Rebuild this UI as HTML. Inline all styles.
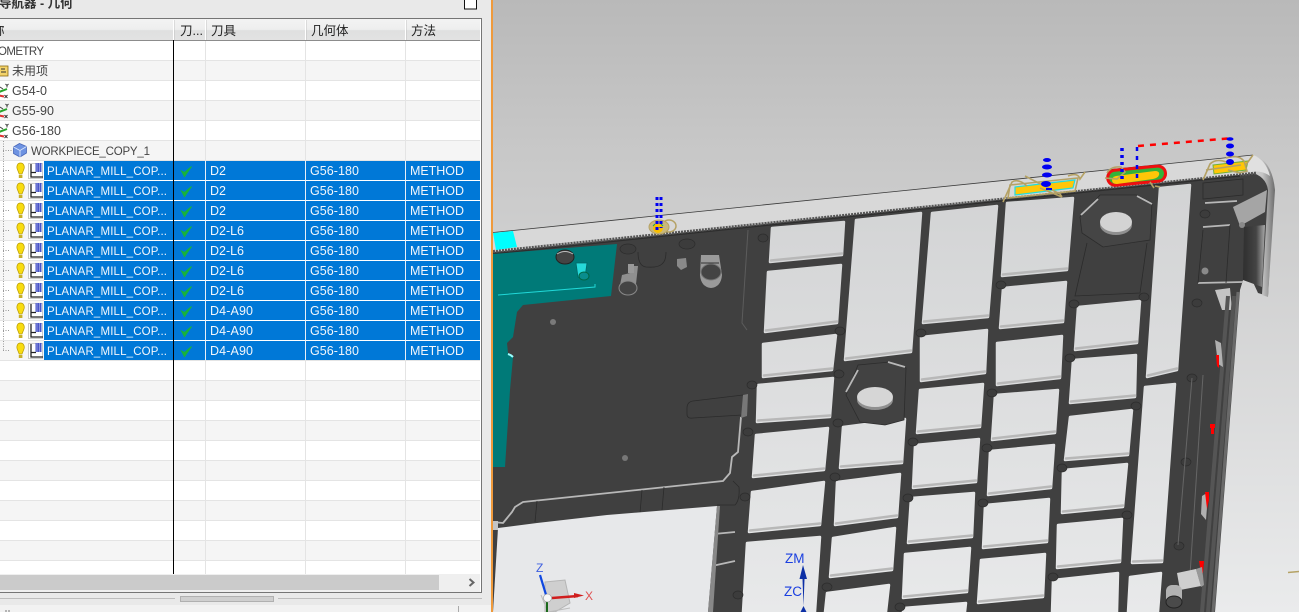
<!DOCTYPE html>
<html><head><meta charset="utf-8"><title>导航器 - 几何</title>
<style>
html,body{margin:0;padding:0;background:#e9e9e9;width:1299px;height:612px;overflow:hidden}
svg{display:block}
text{font-family:"Liberation Sans","Noto Sans CJK SC",sans-serif;font-size:12.5px;fill:#444}
.w text{fill:#f2f6fb}
.u{font-size:11.5px}
.w .u{font-size:11.5px}
.h{fill:#222;font-size:12.5px}
.b{stroke:#b8b8b8;stroke-width:2.500;stroke-linecap:round;fill:none}
.c{fill:url(#c);stroke:url(#c);stroke-width:2.500;stroke-linejoin:round}
.s{fill:#3c3c3c;stroke:#2c2c2c;stroke-width:.7}
.o{fill:none;stroke:#2b2b2b;stroke-width:.8}
.l{fill:none;stroke:#b8b8b8;stroke-width:1.800;stroke-linejoin:round}
.p{fill:none;stroke:#0000f0;stroke-width:3;stroke-dasharray:3 3}
.t{fill:none;stroke:#b5a265;stroke-width:1.600}
</style></head><body>
<svg width="1299" height="612" viewBox="0 0 1299 612" xmlns="http://www.w3.org/2000/svg">
<defs>
<linearGradient id="bg" gradientUnits="userSpaceOnUse" x1="0" y1="0" x2="0" y2="612"><stop offset="0" stop-color="#b9b9b9"/><stop offset=".25" stop-color="#c8c8c8"/><stop offset="1" stop-color="#eaebec"/></linearGradient>
<linearGradient id="c" gradientUnits="userSpaceOnUse" x1="0" y1="180" x2="0" y2="612"><stop offset="0" stop-color="#d2d3d4"/><stop offset="1" stop-color="#e8e9ea"/></linearGradient>
<linearGradient id="hd" x1="0" y1="0" x2="0" y2="1"><stop offset="0" stop-color="#f3f3f3"/><stop offset=".5" stop-color="#eeeeee"/><stop offset=".55" stop-color="#dfe0e0"/><stop offset="1" stop-color="#e2e2e2"/></linearGradient>
<linearGradient id="cyl" x1="0" y1="0" x2="1" y2="0"><stop offset="0" stop-color="#2f2f2f"/><stop offset=".6" stop-color="#444"/><stop offset="1" stop-color="#aaa"/></linearGradient>
<linearGradient id="cap" x1="0" y1="0" x2="1" y2="0"><stop offset="0" stop-color="#dcdcdc"/><stop offset=".5" stop-color="#c4c4c4"/><stop offset="1" stop-color="#6c6c6c"/></linearGradient>
<g id="op">
<path d="M3,170.500h7" stroke="#999" stroke-dasharray="1 1.500" fill="none"/>
<path d="M20.500,163c-3,0-4.200,3-3.300,6l2,5h2.800l2-5c.9-3-.5-6-3.500-6z" fill="#f8dc10" stroke="#b89a00" stroke-width=".7"/>
<rect x="18.800" y="175" width="3.600" height="3" fill="#c7b02a"/>
<path d="M28.500,163.500h14v15h-14z" fill="#fff" stroke="#bdbdbd" stroke-width=".8"/>
<path d="M31,164v13h12M31,172.500h5" stroke="#222" stroke-width="1.300" fill="none"/>
<rect x="35.500" y="163" width="6" height="9" fill="#4a55c8"/>
<path d="M37,163v9M39.500,163v9" stroke="#a9b0ea" stroke-width=".7"/>
<path d="M181.500,171l3,5.500l7-10l-7,6z" fill="#19b23a" stroke="#19b23a" stroke-width="1"/>
</g>
<g id="cs">
<path d="M0,3l3,2" stroke="#444" fill="none"/>
<path d="M-1,8l8-3" stroke="#2aa52a" stroke-width="2" fill="none"/>
<path d="M-1,11.500l5,1" stroke="#d33" stroke-width="2" fill="none"/>
<path d="M5.500,0l1.500,1.500l1.500-1.500M7,1.500v2M4.500,11l3,3M7.500,11l-3,3" stroke="#333" stroke-width=".9" fill="none"/>
</g>
</defs>

<!-- panel -->
<rect width="1299" height="612" fill="#e9e9e9"/>
<text x="-1" y="7.500" style="font-size:12.500px;font-weight:bold;fill:#333">导航器 - 几何</text>
<rect x="464.500" y="-2" width="12" height="11" fill="#fff" stroke="#111"/>

<rect x="0" y="18" width="482" height="575" fill="#fff"/>
<rect x="0" y="19" width="480" height="21" fill="url(#hd)"/>
<path d="M0,40.500H480" stroke="#8c8c8c"/>
<path d="M173.500,20v20M205.500,20v20M305.500,20v20M405.500,20v20" stroke="#fff" stroke-width="1"/>
<path d="M174.500,20v20M206.500,20v20M306.500,20v20M406.500,20v20" stroke="#b4b4b4" stroke-width=".6" opacity=".6"/>
<text class="h" x="-8" y="35">称</text>
<text class="h" x="180" y="35">刀...</text>
<text class="h" x="211" y="35">刀具</text>
<text class="h" x="311" y="35">几何体</text>
<text class="h" x="411" y="35">方法</text>

<!-- stripes -->
<g fill="#f5f5f5">
<rect y="61" width="480" height="19"/><rect y="101" width="480" height="19"/><rect y="141" width="480" height="19"/>
<rect y="381" width="480" height="19"/><rect y="421" width="480" height="19"/><rect y="461" width="480" height="19"/><rect y="501" width="480" height="19"/><rect y="541" width="480" height="19"/>
</g>
<path d="M0,60.500H480M0,80.500H480M0,100.500H480M0,120.500H480M0,140.500H480M0,160.500H480M0,360.500H480M0,380.500H480M0,400.500H480M0,420.500H480M0,440.500H480M0,460.500H480M0,480.500H480M0,500.500H480M0,520.500H480M0,540.500H480M0,560.500H480" stroke="#e4e4e4"/>
<path d="M205.500,41V574M305.500,41V574M405.500,41V574" stroke="#e4e4e4"/>

<!-- selected -->
<g fill="#0078d7">
<rect x="44" y="161" width="436" height="19"/><rect x="44" y="181" width="436" height="19"/><rect x="44" y="201" width="436" height="19"/><rect x="44" y="221" width="436" height="19"/><rect x="44" y="241" width="436" height="19"/><rect x="44" y="261" width="436" height="19"/><rect x="44" y="281" width="436" height="19"/><rect x="44" y="301" width="436" height="19"/><rect x="44" y="321" width="436" height="19"/><rect x="44" y="341" width="436" height="19"/>
</g>
<g fill="#f6f6f6">
<rect x="0" y="181" width="44" height="19"/><rect x="0" y="221" width="44" height="19"/><rect x="0" y="261" width="44" height="19"/><rect x="0" y="301" width="44" height="19"/><rect x="0" y="341" width="44" height="19"/>
</g>
<path d="M0,180.500H44M0,200.500H44M0,220.500H44M0,240.500H44M0,260.500H44M0,280.500H44M0,300.500H44M0,320.500H44M0,340.500H44" stroke="#e6e6e6"/>
<path d="M205.500,161V360M305.500,161V360M405.500,161V360" stroke="#e8f0f8" stroke-width="1"/>
<path d="M3.500,141V350" stroke="#999" stroke-dasharray="1 1.500"/>
<path d="M3,150.500h10" stroke="#999" stroke-dasharray="1 1.500"/>

<!-- icons -->
<rect x="-1" y="66" width="9" height="10" fill="#f3d36a" stroke="#8a6a10" stroke-width=".8"/>
<path d="M1,69h4M1,72h5" stroke="#333" stroke-width="1"/>
<use href="#cs" x="0" y="84"/><use href="#cs" x="0" y="104"/><use href="#cs" x="0" y="124"/>
<path d="M13.500,147l6-3.500l7,3v6.500l-6.500,4l-6.500-3.500z" fill="#6e93e2" stroke="#4a68b8" stroke-width=".8"/>
<path d="M13.500,147l6.500,3.500l6.500-4M20,150.500v7" stroke="#dbe6fa" stroke-width=".9" fill="none"/>
<use href="#op"/><use href="#op" y="20"/><use href="#op" y="40"/><use href="#op" y="60"/><use href="#op" y="80"/><use href="#op" y="100"/><use href="#op" y="120"/><use href="#op" y="140"/><use href="#op" y="160"/><use href="#op" y="180"/>

<!-- text -->
<text class="u" x="-2" y="55" textLength="46">OMETRY</text>
<text x="12" y="75" style="font-size:12px">未用项</text>
<text x="12" y="95" textLength="35">G54-0</text>
<text x="12" y="115" textLength="42">G55-90</text>
<text x="12" y="135" textLength="49">G56-180</text>
<text class="u" x="31" y="155" textLength="119">WORKPIECE_COPY_1</text>
<g class="w">
<text class="u" x="47" y="175" textLength="120">PLANAR_MILL_COP...</text><text x="210" y="175" textLength="16">D2</text><text x="310" y="175" textLength="49">G56-180</text><text x="410" y="175" textLength="54">METHOD</text>
<text class="u" x="47" y="195" textLength="120">PLANAR_MILL_COP...</text><text x="210" y="195" textLength="16">D2</text><text x="310" y="195" textLength="49">G56-180</text><text x="410" y="195" textLength="54">METHOD</text>
<text class="u" x="47" y="215" textLength="120">PLANAR_MILL_COP...</text><text x="210" y="215" textLength="16">D2</text><text x="310" y="215" textLength="49">G56-180</text><text x="410" y="215" textLength="54">METHOD</text>
<text class="u" x="47" y="235" textLength="120">PLANAR_MILL_COP...</text><text x="210" y="235" textLength="34">D2-L6</text><text x="310" y="235" textLength="49">G56-180</text><text x="410" y="235" textLength="54">METHOD</text>
<text class="u" x="47" y="255" textLength="120">PLANAR_MILL_COP...</text><text x="210" y="255" textLength="34">D2-L6</text><text x="310" y="255" textLength="49">G56-180</text><text x="410" y="255" textLength="54">METHOD</text>
<text class="u" x="47" y="275" textLength="120">PLANAR_MILL_COP...</text><text x="210" y="275" textLength="34">D2-L6</text><text x="310" y="275" textLength="49">G56-180</text><text x="410" y="275" textLength="54">METHOD</text>
<text class="u" x="47" y="295" textLength="120">PLANAR_MILL_COP...</text><text x="210" y="295" textLength="34">D2-L6</text><text x="310" y="295" textLength="49">G56-180</text><text x="410" y="295" textLength="54">METHOD</text>
<text class="u" x="47" y="315" textLength="120">PLANAR_MILL_COP...</text><text x="210" y="315" textLength="43">D4-A90</text><text x="310" y="315" textLength="49">G56-180</text><text x="410" y="315" textLength="54">METHOD</text>
<text class="u" x="47" y="335" textLength="120">PLANAR_MILL_COP...</text><text x="210" y="335" textLength="43">D4-A90</text><text x="310" y="335" textLength="49">G56-180</text><text x="410" y="335" textLength="54">METHOD</text>
<text class="u" x="47" y="355" textLength="120">PLANAR_MILL_COP...</text><text x="210" y="355" textLength="43">D4-A90</text><text x="310" y="355" textLength="49">G56-180</text><text x="410" y="355" textLength="54">METHOD</text>
</g>
<path d="M173.500,40V574" stroke="#000" stroke-width="1"/>

<!-- scrollbar + frame -->
<rect x="0" y="574" width="480" height="18" fill="#efefef"/>
<rect x="0" y="575" width="439" height="15" fill="#cbcbcb"/>
<path d="M469.500,579l4,3.500l-4,3.500" fill="none" stroke="#666" stroke-width="2"/>
<path d="M0,18.500H481.500V592.500H0" fill="none" stroke="#757575"/>
<path d="M0,598.500H175M278,598.500H482" stroke="#bdbdbd"/>
<rect x="180.500" y="596.500" width="93" height="5" fill="#cfcfcf" stroke="#b0b0b0"/>
<rect x="0" y="605" width="491" height="7" fill="#f2f2f2"/>
<path d="M458.500,606V612" stroke="#aaa"/>
<path d="M5,611h2M8,611h2" stroke="#777"/>

<!-- viewport -->
<rect x="493" y="0" width="806" height="612" fill="url(#bg)"/>

<!-- wall band -->
<path d="M493,233L1253,155Q1270,160 1273,187L1257,175L493,252Z" fill="#d8d8d8"/>
<path d="M493,232.500L1253,155" stroke="#3a3a3a" stroke-width=".8" fill="none"/>

<!-- body -->
<path d="M493,252L1257,173Q1272,172 1274,190L1268,296L1258,293L1252,280L1243,280L1240,290L1215,612H493Z" fill="#404040"/>
<path d="M1253,155Q1272,160 1275,190L1268,297L1262,295L1268,190Q1266,176 1250,172Z" fill="url(#cap)"/>
<path d="M1240,166L1253,155Q1266,160 1270,176Q1262,170 1250,172Z" fill="#e0e0e0"/>
<path d="M493,251.500L1257,173" stroke="#555" stroke-width="3" stroke-dasharray="2 1"/>
<path d="M493,254L1240,176" stroke="#2d2d2d" stroke-width="1.200"/>

<!-- teal -->
<path d="M493,254L617,244L611,296L523,305L517,312L513,337L507,343L508,353L513,357L510,390L505,467L493,467Z" fill="#007a78"/>
<path d="M498,295L595,287L595,284" stroke="#20d8d8" stroke-width="1" fill="none"/>
<path d="M493,233L513,231L517,247L496,250Z" fill="#00ffff"/>
<ellipse cx="565" cy="257" rx="9" ry="7" fill="#444" stroke="#222"/><path d="M557,254q8-5 16,0" stroke="#bbb" fill="none"/>
<path d="M576,263h11l-2,14a5,4 0 0 1-7,0z" fill="#26d9d9" stroke="#066" stroke-width=".8"/><ellipse cx="584" cy="276" rx="5" ry="4" fill="#0a8d8d" stroke="#064"/>
<path d="M508,354q3,1 5,3" stroke="#9ff" stroke-width="2" fill="none"/>

<!-- dark details -->
<path class="o" d="M638,252q0,14 8,15q12,1 16-3q4-3 4-12"/>
<ellipse cx="628" cy="249" rx="8" ry="5" class="s"/><ellipse cx="687" cy="244" rx="8" ry="5" class="s"/>
<path d="M620,285l2-10l8-2l3-7h5l-2,18q-1,5-8,5q-8,0-8-4z" fill="#8f8f8f"/><ellipse cx="628" cy="288" rx="9" ry="7" fill="#444" stroke="#888"/>
<rect x="628" y="264" width="6" height="9" fill="#999"/>
<path d="M677,259l9-1l1,9l-6,3l-4-4z" fill="#8a8a8a"/>
<path d="M701,255h18l3,20q-1,12-11,13q-10-1-11-13z" fill="#9a9a9a"/><path d="M701,263h18M701,271h20" stroke="#333" stroke-width="1"/><ellipse cx="711" cy="272" rx="10" ry="8" fill="#444" stroke="#777"/>
<path d="M748,230L742,323L747,330" stroke="#5c5c5c" fill="none"/>
<circle cx="553" cy="322" r="3" fill="#7a7a7a"/><circle cx="625" cy="458" r="3" fill="#777"/>
<path class="l" d="M493,522L503,523L512,512L515,507L523,502L723,481L730,473L732,457L738,452L741,417"/>
<path class="o" d="M743,395L693,401Q687,402 687,408V414Q687,419 693,418L742,415"/>
<path d="M743,395l5-1l-1,22l-6,2z" fill="#777"/>
<path class="o" d="M537,501L535,522M642,490L640,513M664,487L662,510"/>
<path class="o" d="M717,505L735,505Q740,500 739,487L733,481"/>
<path class="l" d="M714,534L735,532M712,566L735,561"/>

<!-- white plate -->
<path d="M498,528L537,523L607,515L717,506L708,612H493Z" fill="#e7e8ea"/>
<path d="M717,506L708,612L713,612L720,506Z" fill="#888"/>

<!-- cells -->
<g id="cells">
<polygon class="c" points="772,228 844,222 842,255 770,262"/><path class="b" d="M771,260.500L842,253.500"/>
<polygon class="c" points="768,272 841,265 837,323 765,332"/><path class="b" d="M766,330.500L837,321.500"/>
<polygon class="c" points="763,344 836,335 832,370 763,377"/><path class="b" d="M764,375.500L832,368.500"/>
<polygon class="c" points="758,385 833,378 830,417 757,422"/><path class="b" d="M758,420.500L830,415.500"/>
<polygon class="c" points="756,435 828,428 824,470 753,477"/><path class="b" d="M754,475.500L824,468.500"/>
<polygon class="c" points="752,492 824,482 820,525 749,532"/><path class="b" d="M750,530.500L820,523.500"/>
<polygon class="c" points="747,543 820,537 815,612 743,612"/>
<polygon class="c" points="856,220 921,213 911,352 845,360"/><path class="b" d="M846,358.500L911,350.500"/>
<polygon class="c" points="843,427 905,419 902,463 840,468"/><path class="b" d="M841,466.500L902,461.500"/>
<polygon class="c" points="837,482 900,474 897,517 835,525"/><path class="b" d="M836,523.500L897,515.500"/>
<polygon class="c" points="833,538 895,528 892,570 830,577"/><path class="b" d="M831,575.500L892,568.500"/>
<polygon class="c" points="827,593 889,585 886,612 825,612"/>
<polygon class="c" points="932,213 997,206 988,317 923,323"/><path class="b" d="M924,321.500L988,315.500"/>
<polygon class="c" points="921,337 987,330 985,373 921,381"/><path class="b" d="M922,379.500L985,371.500"/>
<polygon class="c" points="920,390 983,384 980,427 917,433"/><path class="b" d="M918,431.500L980,425.500"/>
<polygon class="c" points="915,445 979,439 976,482 913,488"/><path class="b" d="M914,486.500L976,480.500"/>
<polygon class="c" points="911,498 974,493 972,537 908,543"/><path class="b" d="M909,541.500L972,535.500"/>
<polygon class="c" points="905,554 970,548 967,592 903,598"/><path class="b" d="M904,596.500L967,590.500"/>
<polygon class="c" points="903,608 966,603 965,612 903,612"/>
<polygon class="c" points="1007,203 1073,198 1067,270 1002,276"/><path class="b" d="M1003,274.500L1067,268.500"/>
<polygon class="c" points="1003,288 1066,282 1063,322 1000,328"/><path class="b" d="M1001,326.500L1063,320.500"/>
<polygon class="c" points="997,343 1062,336 1060,378 997,385"/><path class="b" d="M998,383.500L1060,376.500"/>
<polygon class="c" points="995,395 1058,390 1055,433 992,440"/><path class="b" d="M993,438.500L1055,431.500"/>
<polygon class="c" points="990,451 1054,445 1051,488 988,495"/><path class="b" d="M989,493.500L1051,486.500"/>
<polygon class="c" points="985,505 1049,499 1047,542 983,548"/><path class="b" d="M984,546.500L1047,540.500"/>
<polygon class="c" points="981,560 1045,554 1043,597 978,603"/><path class="b" d="M979,601.500L1043,595.500"/>
<polygon class="c" points="1078,307 1140,301 1137,343 1075,350"/><path class="b" d="M1076,348.500L1137,341.500"/>
<polygon class="c" points="1073,360 1136,355 1135,397 1070,403"/><path class="b" d="M1071,401.500L1135,395.500"/>
<polygon class="c" points="1070,417 1132,410 1128,455 1065,460"/><path class="b" d="M1066,458.500L1128,453.500"/>
<polygon class="c" points="1063,470 1127,464 1123,507 1062,513"/><path class="b" d="M1063,511.500L1123,505.500"/>
<polygon class="c" points="1058,525 1122,519 1120,562 1057,568"/><path class="b" d="M1058,566.500L1120,560.500"/>
<polygon class="c" points="1053,580 1118,573 1117,612 1052,612"/>
<polygon class="c" points="1160,188 1190,185 1177,370 1147,377"/><path class="b" d="M1148,375.500L1177,368.500"/>
<polygon class="c" points="1145,387 1175,384 1162,562 1132,563"/><path class="b" d="M1133,561.500L1162,560.500"/>
<polygon class="c" points="1130,577 1161,573 1158,612 1128,612"/>
</g>

<!-- screw bosses -->
<g class="s">
<ellipse cx="1001" cy="285" rx="5" ry="4"/><ellipse cx="921" cy="333" rx="5" ry="4"/><ellipse cx="1074" cy="304" rx="5" ry="4"/><ellipse cx="1144" cy="297" rx="5" ry="4"/><ellipse cx="1070" cy="358" rx="5" ry="4"/><ellipse cx="1205" cy="214" rx="5" ry="4"/><ellipse cx="1197" cy="303" rx="5" ry="4"/>
<ellipse cx="992" cy="393" rx="5" ry="4"/><ellipse cx="913" cy="442" rx="5" ry="4"/><ellipse cx="987" cy="448" rx="5" ry="4"/><ellipse cx="1062" cy="468" rx="5" ry="4"/><ellipse cx="1136" cy="406" rx="5" ry="4"/><ellipse cx="1127" cy="515" rx="5" ry="4"/><ellipse cx="983" cy="503" rx="5" ry="4"/><ellipse cx="908" cy="498" rx="5" ry="4"/><ellipse cx="1053" cy="577" rx="5" ry="4"/><ellipse cx="1192" cy="378" rx="5" ry="4"/><ellipse cx="1186" cy="462" rx="5" ry="4"/><ellipse cx="1179" cy="546" rx="5" ry="4"/><ellipse cx="900" cy="607" rx="5" ry="4"/>
<ellipse cx="752" cy="385" rx="5" ry="4"/><ellipse cx="748" cy="432" rx="5" ry="4"/><ellipse cx="745" cy="497" rx="5" ry="4"/><ellipse cx="839" cy="374" rx="5" ry="4"/><ellipse cx="838" cy="423" rx="5" ry="4"/><ellipse cx="835" cy="477" rx="5" ry="4"/><ellipse cx="827" cy="587" rx="5" ry="4"/><ellipse cx="738" cy="595" rx="5" ry="4"/><ellipse cx="763" cy="238" rx="5" ry="4"/><ellipse cx="840" cy="331" rx="5" ry="4"/>
</g>

<!-- pocket with hole (upper) -->
<path d="M1080,217L1100,195L1137,195L1152,203L1150,240L1103,247L1082,233Z" fill="#454545" stroke="#2c2c2c" stroke-width=".8"/>
<path class="l" d="M1081,215L1098,199M1137,196L1152,204"/>
<path class="o" d="M1087,243L1075,296L1140,293L1147,243"/>
<ellipse cx="1116" cy="225" rx="16" ry="10" fill="#8f8f8f"/><ellipse cx="1116" cy="222" rx="16" ry="10" fill="#d3d3d3"/>
<!-- hole lower -->
<path d="M846,395L858,365L890,362L906,368L904,420L885,425L860,422Z" fill="#424242" stroke="#2c2c2c" stroke-width=".8"/>
<path class="l" d="M846,392L858,370M888,362L905,367"/>
<ellipse cx="875" cy="400" rx="18" ry="10" fill="#8f8f8f"/><ellipse cx="875" cy="397" rx="18" ry="10" fill="#d6d6d6"/>

<!-- right end detail -->
<path class="o" d="M1203,183L1243,179L1243,195L1203,199Z"/>
<path class="l" d="M1205,203L1237,201M1203,227L1230,225M1198,283L1243,282"/>
<path d="M1233,207L1267,190L1265,212L1240,226Z" fill="#a5a5a5"/>
<path d="M1244,227L1265,225L1262,287L1243,280Z" fill="url(#cyl)"/>
<path d="M1215,290L1230,288L1232,310L1222,310Z" fill="#c4c4c4"/>
<circle cx="1205" cy="271" r="3.500" fill="#8a8a8a"/><circle cx="1242" cy="225" r="3" fill="#8a8a8a"/>
<path class="o" d="M1203,230L1198,283M1230,225L1226,283"/>
<path d="M1234,296L1208,612M1228,296L1202,612" stroke="#555" stroke-width="4" fill="none"/>
<path d="M1238,292L1213,612" stroke="#6a6a6a" stroke-width="3" fill="none"/>
<path d="M1192,378L1178,545M1203,375L1190,575" stroke="#666" fill="none"/>
<path d="M1215,340l3,24l5,3l-2-24z" fill="#b0b0b0"/>
<path d="M1216,355l3,0l0,13l-2-2z" fill="#f00"/>
<path d="M1210,424h5v4h-1v6h-3v-6h-1z" fill="#f00"/>
<path d="M1202,496l5-3l1,2l-2,25l-5-6z" fill="#b0b0b0"/><path d="M1205,492h4v8l-2,9z" fill="#f00"/>
<path d="M1199,561h5l-1,12l-2,0z" fill="#f00"/>
<path d="M1177,573L1196,569L1201,586L1180,590Z" fill="#cfcfcf"/><path d="M1196,569l6-2l2,18l-3,2z" fill="#999"/>
<rect x="1166" y="585" width="16" height="20" rx="6" fill="#b2b2b2"/><ellipse cx="1174" cy="602" rx="8" ry="6" fill="#4a4a4a" stroke="#222"/>
<path d="M1288,572.500L1299,571.500" stroke="#b5a265" stroke-width="1.500"/>

<!-- toolpath 1 -->
<ellipse cx="669" cy="226" rx="7" ry="6" fill="none" stroke="#b5a265" stroke-width="1.500"/>
<ellipse cx="659" cy="227" rx="10" ry="7" fill="#c9b87c" stroke="#b5a265"/>
<circle cx="658" cy="228" r="5" fill="#f9bf00"/>
<path d="M653,226l2-2M663,226l-2-2" stroke="#1fa84f" fill="none"/>
<path class="p" d="M657,197V230M661,197V228"/>
<!-- toolpath 2 -->
<path d="M1015,187L1075,180L1073,188L1015,195Z" fill="#ffc608" stroke="#22dcdc" stroke-width="1.200"/>
<path d="M1010,185L1078,178L1075,191L1008,198Z" class="t" stroke-width="2"/>
<path class="t" d="M1003,202L1012,182q6-4 15,4M1025,176L1060,194L1062,197M1068,176q10-4 12,3l5-7M1040,188L1062,197"/>
<g fill="#0000f0"><ellipse cx="1047" cy="160" rx="4" ry="2"/><ellipse cx="1047" cy="167" rx="5" ry="2.500"/><ellipse cx="1047" cy="175" rx="5" ry="2.500"/><ellipse cx="1046" cy="184" rx="5" ry="3"/><rect x="1046" y="188" width="6" height="2"/></g>
<!-- toolpath 3 -->
<rect x="0" y="0" width="58" height="15" rx="7.500" transform="translate(1107,171) rotate(-5.500)" fill="#34b23a" stroke="#ee1010" stroke-width="3"/>
<path d="M1116,176L1155,171Q1160,171 1159,175Q1158,178 1153,179L1117,184Q1112,184 1112,180Q1112,177 1116,176Z" fill="#ffc608"/>
<path class="t" d="M1107,173q4-7 14-6l4,5l-8,7l-12-1"/>
<path class="t" d="M1150,182l4,6M1155,186l5,1"/>
<path d="M1122,148V180" stroke="#0000f0" stroke-width="3.500" stroke-dasharray="3 4" fill="none"/>
<path d="M1137,178V146" stroke="#0000f0" stroke-width="2.500" stroke-dasharray="4 5" fill="none"/>
<path d="M1138,146L1233,138" stroke="#f00" stroke-width="2.500" stroke-dasharray="6 6" fill="none"/>
<!-- toolpath 4 -->
<path d="M1213,165L1248,161L1246,170L1214,174Z" fill="#ffc608" stroke="#6fb03a"/>
<path class="t" d="M1203,180L1210,164q6-6 16-2M1226,158q12-4 18,3l3,10l-8,2M1245,166l8-11M1206,170l35-5M1228,170l12,3"/>
<g fill="#0000f0"><ellipse cx="1230" cy="139" rx="3.500" ry="1.800"/><ellipse cx="1230" cy="146" rx="4" ry="2.500"/><ellipse cx="1230" cy="154" rx="4" ry="2.500"/><ellipse cx="1230" cy="162" rx="4" ry="3"/></g>

<!-- ZM ZC -->
<text x="785" y="563" style="font-size:13.500px;fill:#1a3fe0">ZM</text>
<text x="784" y="596" style="font-size:13.500px;fill:#1a3fe0">ZC</text>
<path d="M803,565l4,14h-2.500l-1,27l3,6h-6l3-6l-1-27h-3z" fill="#0c2fa5"/>

<!-- triad -->
<path d="M545,582L565,580L570,603L555,612H545Z" fill="#cfcfcf" stroke="#b5b5b5"/>
<path d="M541,595L548,612L570,608" fill="none" stroke="#bcbcbc"/>
<path d="M547,598L540,575" stroke="#0f47e0" stroke-width="2.200"/>
<path d="M547,598L547,612" stroke="#1c6a1c" stroke-width="2"/>
<path d="M552,598L578,596" stroke="#d01e1e" stroke-width="2.500"/><path d="M574,593l10,2.500l-10,2.500z" fill="#d01e1e"/>
<circle cx="547.500" cy="598" r="4" fill="#f6f6f6" stroke="#999" stroke-width=".6"/>
<text x="536" y="572" style="font-size:12px;fill:#3f5fe0">Z</text>
<text x="585" y="600" style="font-size:12px;fill:#e05050">X</text>

<!-- orange border -->
<path d="M492,0V612" stroke="#ef9a3c" stroke-width="2"/>
<rect x="493" y="521" width="5" height="9" fill="#c4c4c4"/>
</svg>
</body></html>
